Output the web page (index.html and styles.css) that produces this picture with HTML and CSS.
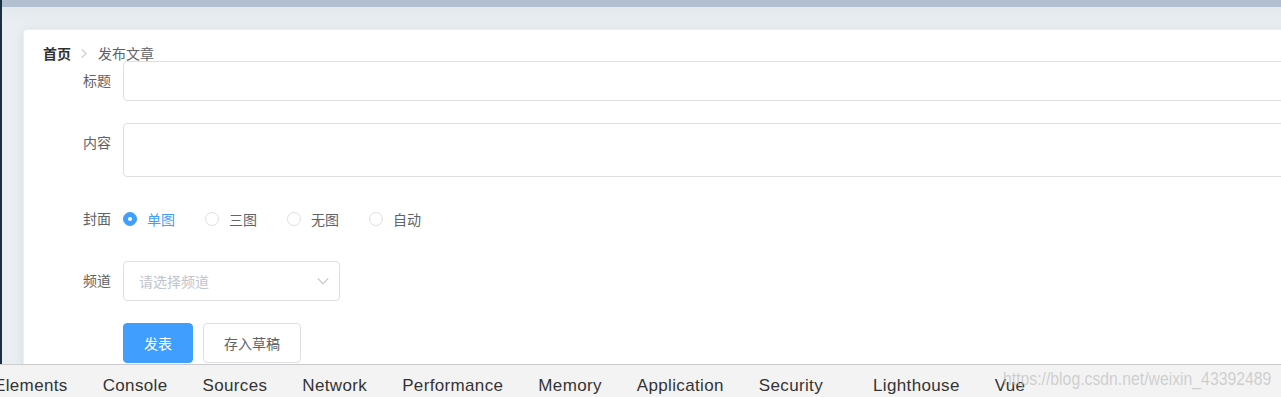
FILE: index.html
```html
<html>
	<head>
		<meta charset="utf8"/>
		<title>发布文章</title>
		<link rel="stylesheet" href="styles.css">
	</head>
	<body>
		<div class="screen">
			<div class="page">
				<div class="aside"></div>
				<div class="layout">
					<div class="header"></div>
					<div class="main">
						<div class="card">
							<div class="breadcrumb">
								<span class="crumb crumb-home">首页</span>
								<svg class="crumb-sep" viewBox="0 0 16 16" width="13" height="13">
									<path d="M6 3 L11 8 L6 13" fill="none" stroke="#c0c4cc" stroke-width="1.3"/>
								</svg>
								<span class="crumb">发布文章</span>
							</div>

							<div class="form">
								<div class="form-item">
									<label class="form-label">标题</label>
									<div class="form-content"><div class="input"></div></div>
								</div>
								<div class="form-item">
									<label class="form-label">内容</label>
									<div class="form-content"><div class="textarea"></div></div>
								</div>
								<div class="form-item">
									<label class="form-label">封面</label>
									<div class="form-content radios">
										<span class="radio checked"><span class="radio-dot"></span><span class="radio-text">单图</span></span>
										<span class="radio"><span class="radio-dot"></span><span class="radio-text">三图</span></span>
										<span class="radio"><span class="radio-dot"></span><span class="radio-text">无图</span></span>
										<span class="radio"><span class="radio-dot"></span><span class="radio-text">自动</span></span>
									</div>
								</div>
								<div class="form-item">
									<label class="form-label">频道</label>
									<div class="form-content">
										<div class="select">
											<span class="placeholder">请选择频道</span>
											<svg viewBox="0 0 16 16" width="14" height="14">
												<path d="M2 5 L8 11 L14 5" fill="none" stroke="#c0c4cc" stroke-width="1.3"/>
											</svg>
										</div>
									</div>
								</div>
								<div class="form-item">
									<div class="form-label"></div>
									<div class="form-content">
										<button class="btn btn-primary">发表</button>
										<button class="btn">存入草稿</button>
									</div>
								</div>
							</div>
						</div>
					</div>
				</div>
			</div>

			<div class="devtools">
				<span class="tab first">Elements</span>
				<span class="tab">Console</span>
				<span class="tab">Sources</span>
				<span class="tab">Network</span>
				<span class="tab">Performance</span>
				<span class="tab">Memory</span>
				<span class="tab">Application</span>
				<span class="tab">Security</span>
				<span class="tab lighthouse">Lighthouse</span>
				<span class="tab">Vue</span>
				<span class="watermark">https://blog.csdn.net/weixin_43392489</span>
			</div>
		</div>
	</body>
</html>
```

FILE: styles.css
```css
* {
	box-sizing : border-box;
}

html, body {
	margin   : 0;
	height   : 100%;
	overflow : hidden;
}

body {
	font-family : "Noto Sans CJK SC", "Liberation Sans", sans-serif;
	font-size   : 14px;
	color       : #606266;
}

.screen {
	display        : flex;
	flex-direction : column;
	height         : 397px;
	width          : 1281px;
	overflow       : hidden;
}

.page {
	display  : flex;
	height   : 364px;
	overflow : hidden;
}

.aside {
	width      : 2px;
	flex       : none;
	background : #1c3045;
}

.layout {
	display        : flex;
	flex-direction : column;
	width          : 1500px;
	flex           : none;
}

.header {
	height     : 7px;
	flex       : none;
	background : #b3c0d1;
}

.main {
	flex       : 1;
	padding    : 22px 0 0 21px;
	background : linear-gradient(#e4e9ee, #e9eef3 18px);
}

.card {
	height        : 400px;
	background    : #fff;
	border        : 1px solid #ebeef5;
	border-radius : 4px;
	box-shadow    : 0 2px 12px rgba(0, 0, 0, .08);
	padding       : 15px 19px 0;
}

.breadcrumb {
	display     : flex;
	align-items : center;
	height      : 16px;
	line-height : 16px;
	font-size   : 14px;
}

.crumb-home {
	font-weight : bold;
	color       : #303133;
}

.crumb-sep {
	margin : 0 8px 0 6px;
}

.form-item {
	display       : flex;
	margin-bottom : 22px;
}

.form-label {
	width         : 80px;
	flex          : none;
	padding-right : 12px;
	text-align    : right;
	line-height   : 38px;
	color         : #606266;
}

.form-content {
	flex        : 1;
	display     : flex;
	align-items : center;
	min-height  : 40px;
}

.input, .textarea, .select {
	border        : 1px solid #dcdfe6;
	border-radius : 4px;
	background    : #fff;
}

.input {
	width  : 100%;
	height : 40px;
}

.textarea {
	width  : 100%;
	height : 54px;
}

.radio {
	display      : flex;
	align-items  : center;
	margin-right : 30px;
}

.radio-dot {
	width         : 14px;
	height        : 14px;
	border        : 1px solid #dcdfe6;
	border-radius : 50%;
	background    : #fff;
}

.radio.checked .radio-dot {
	border     : 1px solid #409eff;
	background : #409eff;
	position   : relative;
}

.radio.checked .radio-dot::after {
	content       : "";
	position      : absolute;
	left          : 4px;
	top           : 4px;
	width         : 4px;
	height        : 4px;
	border-radius : 50%;
	background    : #fff;
}

.radio-text {
	padding-left : 10px;
	color        : #606266;
}

.radio.checked .radio-text {
	color : #409eff;
}

.select {
	width           : 217px;
	height          : 40px;
	display         : flex;
	align-items     : center;
	justify-content : space-between;
	padding         : 0 9px 0 15px;
}

.placeholder {
	color : #c0c4cc;
}

.btn {
	height        : 40px;
	padding       : 0 20px;
	font-family   : "Noto Sans CJK SC", sans-serif;
	font-size     : 14px;
	color         : #606266;
	background    : #fff;
	border        : 1px solid #dcdfe6;
	border-radius : 4px;
	margin-right  : 10px;
}

.btn-primary {
	color      : #fff;
	background : #409eff;
	border     : 1px solid #409eff;
}

.devtools {
	position       : relative;
	height         : 33px;
	flex           : none;
	display        : flex;
	align-items    : center;
	background     : #f3f3f3;
	border-top     : 1px solid #cbcbcb;
	font-family    : "Liberation Sans", sans-serif;
	font-size      : 17px;
	letter-spacing : 0.35px;
	color          : #333;
	white-space    : nowrap;
	padding-top    : 10px;
}

.tab {
	margin-right : 35px;
}

.tab.first {
	margin-left : -6px;
}

.tab.lighthouse {
	margin-left : 15px;
}

.watermark {
	position         : absolute;
	left             : 1003px;
	top              : 3px;
	font-size        : 19px;
	letter-spacing   : 0;
	color            : rgba(190, 190, 190, .7);
	transform        : scaleX(.83);
	transform-origin : left center;
}
```
